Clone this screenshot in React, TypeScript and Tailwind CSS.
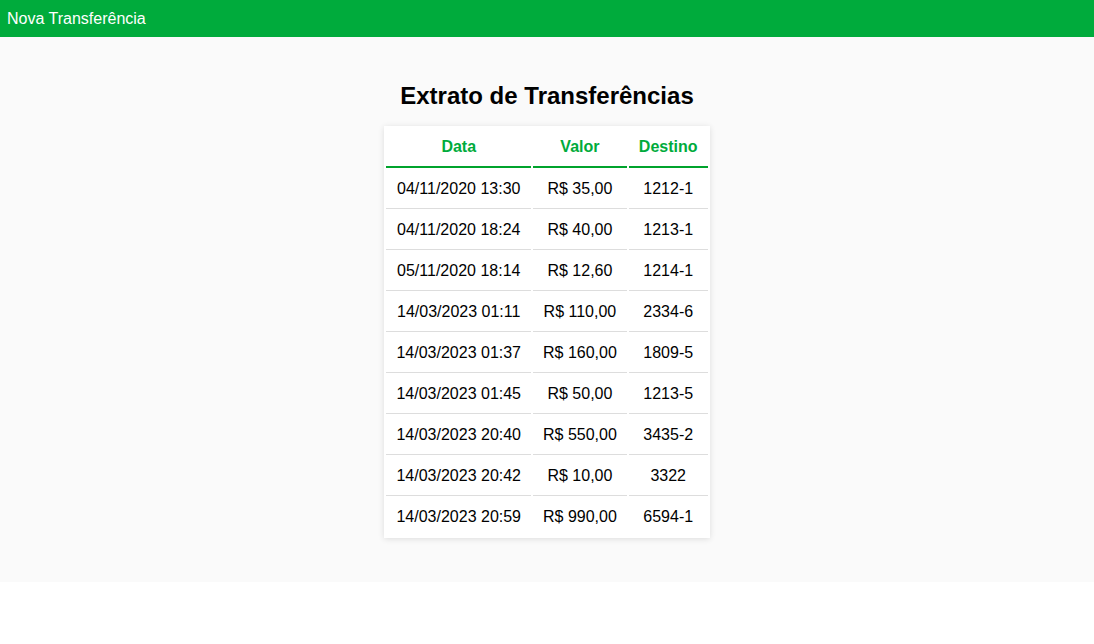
const transferencias = [
  { data: '04/11/2020 13:30', valor: 'R$ 35,00', destino: '1212-1' },
  { data: '04/11/2020 18:24', valor: 'R$ 40,00', destino: '1213-1' },
  { data: '05/11/2020 18:14', valor: 'R$ 12,60', destino: '1214-1' },
  { data: '14/03/2023 01:11', valor: 'R$ 110,00', destino: '2334-6' },
  { data: '14/03/2023 01:37', valor: 'R$ 160,00', destino: '1809-5' },
  { data: '14/03/2023 01:45', valor: 'R$ 50,00', destino: '1213-5' },
  { data: '14/03/2023 20:40', valor: 'R$ 550,00', destino: '3435-2' },
  { data: '14/03/2023 20:42', valor: 'R$ 10,00', destino: '3322' },
  { data: '14/03/2023 20:59', valor: 'R$ 990,00', destino: '6594-1' },
]

const App = () => {
  return (
    <div className="min-h-[644px] bg-white font-['Liberation_Sans',Arial,sans-serif] text-black">
      {/* Barra superior */}
      <header className="flex h-[37px] items-center bg-[#00ab3c] px-[7px]">
        <a className="text-[16px] leading-[18px] text-white">Nova Transferência</a>
      </header>

      {/* Extrato */}
      <main className="flex flex-col items-center bg-[#fafafa] pt-[45px] pb-[44px]">
        <h2 className="mb-[16px] text-[24px] leading-[28px] font-bold">Extrato de Transferências</h2>

        <table className="border-separate border-spacing-[2px] bg-white text-center text-[16px] shadow-[0_1px_6px_rgba(0,0,0,0.12)]">
          <thead>
            <tr>
              <th className="border-b-2 border-[#00a32c] px-[10px] py-[10px] leading-[18px] font-bold text-[#00ab3c]">Data</th>
              <th className="border-b-2 border-[#00a32c] px-[10px] py-[10px] leading-[18px] font-bold text-[#00ab3c]">Valor</th>
              <th className="border-b-2 border-[#00a32c] px-[10px] py-[10px] leading-[18px] font-bold text-[#00ab3c]">Destino</th>
            </tr>
          </thead>
          <tbody>
            {transferencias.map((t) => (
              <tr key={t.data} className="[&:last-child>td]:border-b-0">
                <td className="border-b border-[#dddddd] px-[10px] py-[10px] leading-[18px]">{t.data}</td>
                <td className="border-b border-[#dddddd] px-[10px] py-[10px] leading-[18px]">{t.valor}</td>
                <td className="border-b border-[#dddddd] px-[10px] py-[10px] leading-[18px]">{t.destino}</td>
              </tr>
            ))}
          </tbody>
        </table>
      </main>
    </div>
  )
}

export default App
